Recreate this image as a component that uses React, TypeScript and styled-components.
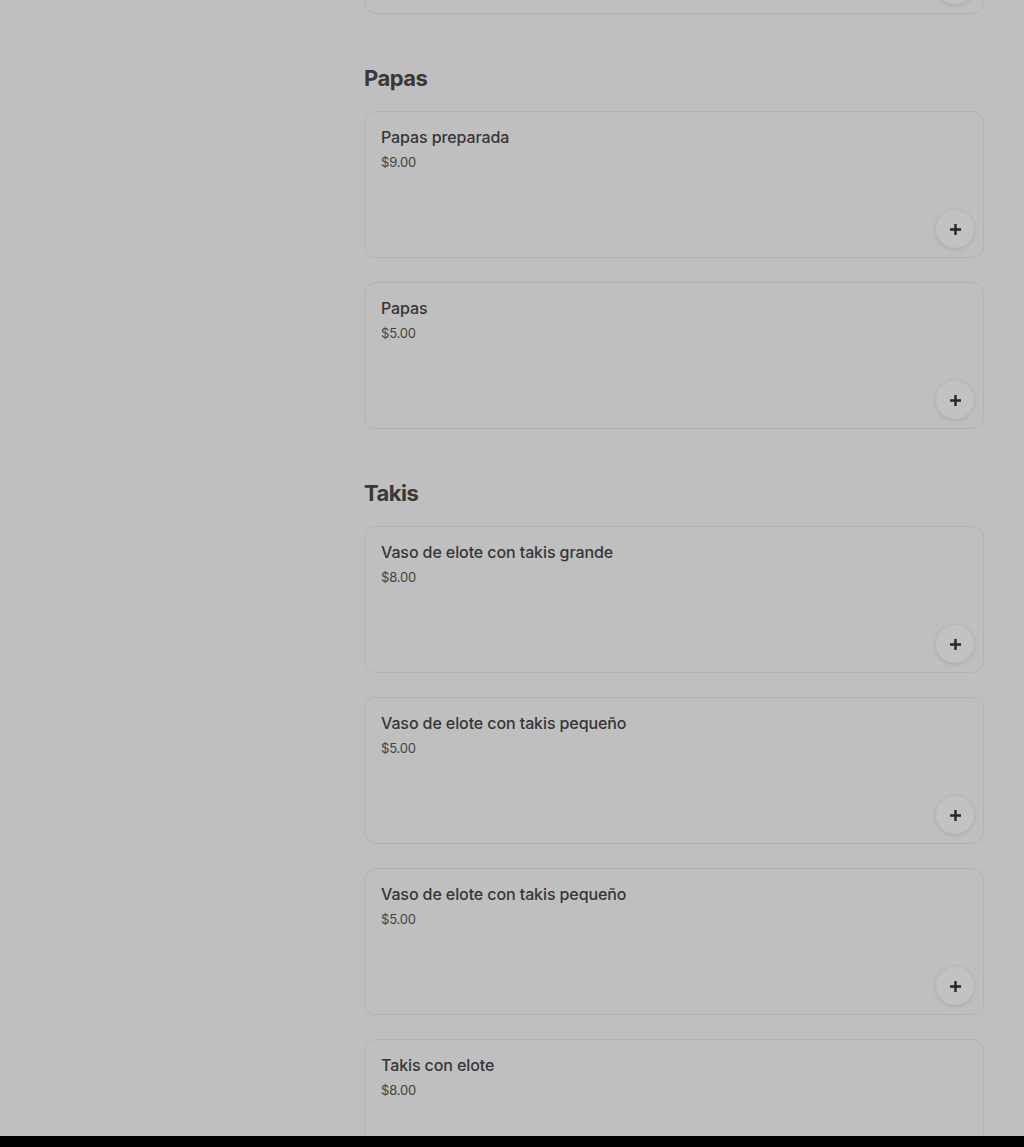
import React from "react";
import styled, { createGlobalStyle } from "styled-components";

const GlobalStyle = createGlobalStyle`
  html, body {
    margin: 0;
    padding: 0;
    background: #000;
  }
  * {
    box-sizing: border-box;
  }
`;

const Viewport = styled.div`
  height: 1136px;
  overflow: hidden;
  background: #bfbfbf;
  font-family: Inter, "Noto Sans", sans-serif;
  color: #333;
`;

const BottomBar = styled.div`
  height: 11px;
  background: #000;
`;

const Layout = styled.div`
  display: grid;
  grid-template-columns: 364px 1fr;
  padding-right: 40px;
`;

const Sidebar = styled.aside``;

// the list is scrolled: only the bottom of the first card is still visible
const Menu = styled.main`
  display: flex;
  flex-direction: column;
  margin-top: -133px;
`;

const Section = styled.section<{ $first?: boolean }>`
  display: flex;
  flex-direction: column;
  gap: 24px;
  margin-top: ${(p) => (p.$first ? "0" : "48px")};
`;

const SectionTitle = styled.h2`
  margin: 0 0 -7px;
  font-size: 22px;
  line-height: 32px;
  font-weight: 700;
  letter-spacing: -0.5px;
  color: #383838;
`;

const Card = styled.div`
  height: 147px;
  display: flex;
  flex-direction: column;
  padding: 15px 9px 9px 16px;
  border: 1px solid #b3b3b3;
  border-radius: 12px;
  background: #bfbfbf;
`;

const ItemName = styled.div`
  font-size: 16px;
  line-height: 20px;
  font-weight: 500;
  color: #363636;
  letter-spacing: -0.1px;
`;

const ItemPrice = styled.div`
  margin-top: 6px;
  font-size: 13px;
  line-height: 18px;
  color: #444;
  letter-spacing: -0.2px;
`;

const AddButton = styled.button`
  margin-top: auto;
  align-self: flex-end;
  width: 38px;
  height: 38px;
  border: none;
  border-radius: 50%;
  background: #c2c2c2;
  box-shadow: 0 1px 5px rgba(0, 0, 0, 0.12);
  display: flex;
  align-items: center;
  justify-content: center;
  padding: 0;
  cursor: pointer;
`;

const PlusIcon = () => (
  <svg width="13" height="13" viewBox="0 0 13 13">
    <path d="M6.5 1v11M1 6.5h11" stroke="#262626" strokeWidth="2.4" />
  </svg>
);

interface IItem {
  name?: string;
  price?: string;
}

interface ISection {
  title?: string;
  items: IItem[];
}

const sections: ISection[] = [
  { items: [{}] },
  {
    title: "Papas",
    items: [
      { name: "Papas preparada", price: "$9.00" },
      { name: "Papas", price: "$5.00" },
    ],
  },
  {
    title: "Takis",
    items: [
      { name: "Vaso de elote con takis grande", price: "$8.00" },
      { name: "Vaso de elote con takis pequeño", price: "$5.00" },
      { name: "Vaso de elote con takis pequeño", price: "$5.00" },
      { name: "Takis con elote", price: "$8.00" },
    ],
  },
];

const MenuItem: React.FC<IItem> = ({ name, price }) => (
  <Card>
    {name && <ItemName>{name}</ItemName>}
    {price && <ItemPrice>{price}</ItemPrice>}
    <AddButton aria-label="Agregar">
      <PlusIcon />
    </AddButton>
  </Card>
);

const App: React.FC = () => {
  return (
    <>
      <GlobalStyle />
      <Viewport>
        <Layout>
          <Sidebar />
          <Menu>
            {sections.map((section, i) => (
              <Section key={i} $first={i === 0}>
                {section.title && <SectionTitle>{section.title}</SectionTitle>}
                {section.items.map((item, j) => (
                  <MenuItem key={j} name={item.name} price={item.price} />
                ))}
              </Section>
            ))}
          </Menu>
        </Layout>
      </Viewport>
      <BottomBar />
    </>
  );
};

export default App;
